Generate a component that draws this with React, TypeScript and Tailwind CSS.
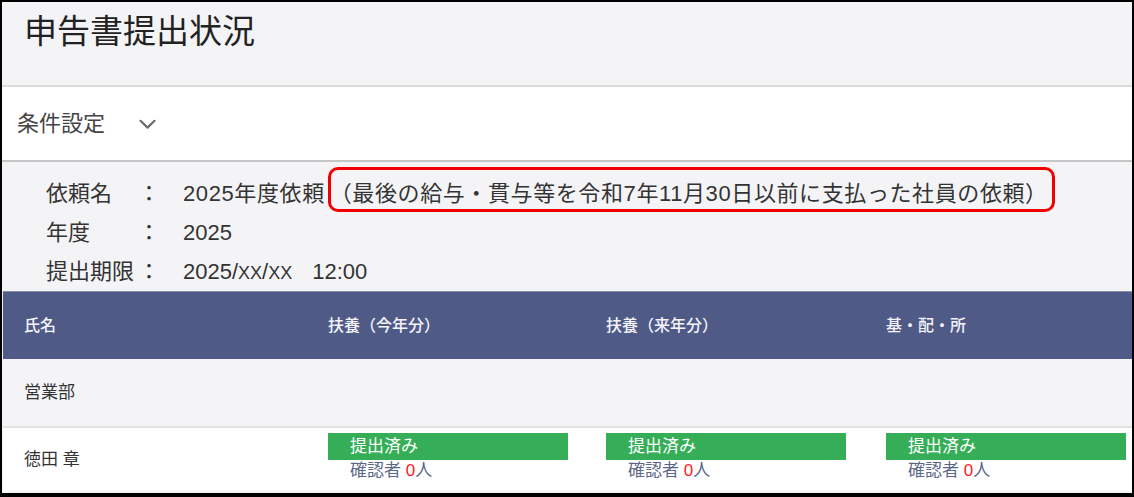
export default function App() {
  const cols = "grid grid-cols-[304px_278px_280px_1fr]";
  const statusCols = ["扶養（今年分）", "扶養（来年分）", "基・配・所"];

  return (
    <div className="w-[1134px] h-[497px] overflow-hidden border-black border-t-2 border-x-2 border-b-4 bg-[#f4f4f7] flex flex-col font-['Liberation_Sans','Noto_Sans_CJK_JP',sans-serif] text-[#333]">
      {/* page title */}
      <div className="h-[83px] shrink-0 pl-[22px] pt-[8px]">
        <h1 className="text-[33px] leading-[44px] text-[#222]">申告書提出状況</h1>
      </div>
      <div className="h-[2px] shrink-0 bg-[#dcdcdc]" />

      {/* filter toggle */}
      <div className="h-[73px] shrink-0 bg-white flex items-center pl-[15px]">
        <span className="text-[22px] text-[#444]">条件設定</span>
        <svg className="ml-[34px] mt-px" width="17" height="11" viewBox="0 0 17 11" fill="none">
          <path d="M1.5 1.8 L8.5 8.6 L15.5 1.8" stroke="#6b6b6b" strokeWidth="2.2" strokeLinecap="round" strokeLinejoin="round" />
        </svg>
      </div>
      <div className="h-[2px] shrink-0 bg-[#c6c6c6]" />

      {/* request details */}
      <div className="shrink-0 pt-[12px] pl-[44px] text-[22px] text-[#333]">
        <div className="h-[39px] flex items-center">
          <span className="w-[92px]">依頼名</span>
          <span className="w-[20px] text-center">：</span>
          <span className="ml-[25px] tracking-[0.6px]">2025年度依頼</span>
          <span className="relative ml-[5px] tracking-[0.6px]">
            （最後の給与・貫与等を令和7年11月30日以前に支払った社員の依頼）
            <span className="absolute -top-[10px] bottom-[-2px] -left-[2px] -right-[7px] rounded-[10px] border-[3px] border-[#f00000]" />
          </span>
        </div>
        <div className="h-[39px] flex items-center">
          <span className="w-[92px]">年度</span>
          <span className="w-[20px] text-center">：</span>
          <span className="ml-[25px]">2025</span>
        </div>
        <div className="h-[39px] flex items-center">
          <span className="w-[92px]">提出期限</span>
          <span className="w-[20px] text-center">：</span>
          <span className="ml-[25px]">
            2025/<span className="text-[18px]">XX</span>/<span className="text-[18px]">XX</span>
          </span>
          <span className="ml-[20px]">12:00</span>
        </div>
      </div>

      {/* submission table */}
      <div className="ml-px flex flex-col">
        <div className={`${cols} h-[68px] items-center bg-[#4f5a87] text-[#f4f4fa] text-[16px] font-medium border-t border-[#8a91ad]`}>
          <div className="pl-[21px]">氏名</div>
          {statusCols.map((c) => (
            <div key={c} className="pl-[21px]">{c}</div>
          ))}
        </div>
        <div className="h-[69px] flex items-center pl-[21px] bg-[#f4f4f7] border-b-2 border-[#e2e2e4] text-[17px] text-[#333]">
          営業部
        </div>
        <div className={`${cols} h-[63px] bg-white text-[17px]`}>
          <div className="pl-[21px] flex items-center text-[#333]">徳田 章</div>
          {statusCols.map((c) => (
            <div key={c} className="pl-[21px] pt-[5px]">
              <div className="w-[240px] h-[27px] bg-[#35ae57] text-white pl-[22px] leading-[27px]">提出済み</div>
              <div className="pl-[22px] leading-[22px] text-[#5b6789]">
                確認者 <span className="text-[#ff2020]">0</span>人
              </div>
            </div>
          ))}
        </div>
      </div>
    </div>
  );
}
